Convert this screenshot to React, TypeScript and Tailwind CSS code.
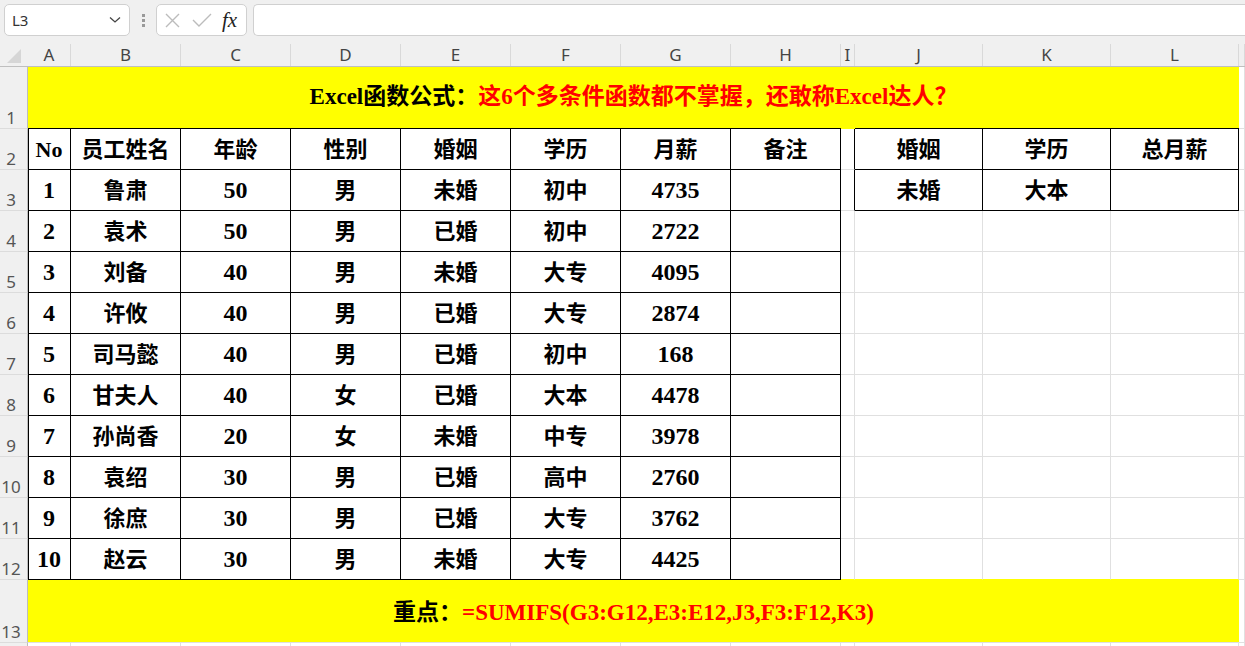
const SERIF = "font-['Liberation_Serif','Noto_Sans_CJK_SC',serif]";
const UI = "font-['Noto_Sans','Liberation_Sans',sans-serif]";

const colW = [
  'w-[43px]',
  'w-[110px]',
  'w-[110px]',
  'w-[110px]',
  'w-[110px]',
  'w-[110px]',
  'w-[110px]',
  'w-[110px]',
  'w-[14px]',
  'w-[128px]',
  'w-[128px]',
  'w-[128px]',
];
const letters = ['A', 'B', 'C', 'D', 'E', 'F', 'G', 'H', 'I', 'J', 'K', 'L', ''];

const head = ['No', '员工姓名', '年龄', '性别', '婚姻', '学历', '月薪', '备注'];
const data: (string | number)[][] = [
  [1, '鲁肃', 50, '男', '未婚', '初中', 4735],
  [2, '袁术', 50, '男', '已婚', '初中', 2722],
  [3, '刘备', 40, '男', '未婚', '大专', 4095],
  [4, '许攸', 40, '男', '已婚', '大专', 2874],
  [5, '司马懿', 40, '男', '已婚', '初中', 168],
  [6, '甘夫人', 40, '女', '已婚', '大本', 4478],
  [7, '孙尚香', 20, '女', '未婚', '中专', 3978],
  [8, '袁绍', 30, '男', '已婚', '高中', 2760],
  [9, '徐庶', 30, '男', '已婚', '大专', 3762],
  [10, '赵云', 30, '男', '未婚', '大专', 4425],
];
const side = [
  ['婚姻', '学历', '总月薪'],
  ['未婚', '大本', ''],
];

function RowHead({ n, h }: { n?: number; h: string }) {
  return (
    <div
      className={`${h} w-[28px] shrink-0 bg-[#f0f0f0] border-r border-b border-r-[#bdbdbd] border-b-[#dcdcdc] flex items-end justify-center pr-[5px] pb-[1px] text-[17px] leading-[18px] text-[#555] ${UI}`}
    >
      {n}
    </div>
  );
}

function Cell({
  w,
  line,
  children,
  extra = '',
}: {
  w: string;
  line: string;
  children?: React.ReactNode;
  extra?: string;
}) {
  const num = typeof children === 'number';
  return (
    <div
      className={`${w} h-full shrink-0 border-r border-b ${line} flex items-center justify-center text-black ${
        num ? 'text-[24px] font-bold' : 'text-[22px] font-semibold'
      } ${extra}`}
    >
      {children}
    </div>
  );
}

function Toolbar() {
  return (
    <div className={`h-[36px] bg-[#f0f0f0] flex items-end pl-[4px] ${UI}`}>
      <div className="w-[126px] h-[32px] bg-white border border-[#d0d0d0] rounded-[5px] flex items-center justify-between pl-[7px] pr-[8px]">
        <span className="text-[15px] text-[#333]">L3</span>
        <svg width="12" height="8" viewBox="0 0 12 8">
          <path d="M1 1.5 L6 6 L11 1.5" fill="none" stroke="#444" strokeWidth="1.3" />
        </svg>
      </div>
      <div className="w-[26px] h-[32px] flex flex-col items-center justify-center gap-[2px]">
        <span className="w-[3px] h-[3px] bg-[#999]" />
        <span className="w-[3px] h-[3px] bg-[#999]" />
        <span className="w-[3px] h-[3px] bg-[#999]" />
      </div>
      <div className="w-[91px] h-[32px] bg-white border border-[#d0d0d0] rounded-[5px] flex items-center pl-[7px] gap-[11px]">
        <svg width="17" height="17" viewBox="0 0 17 17">
          <path d="M2 2 L15 15 M15 2 L2 15" stroke="#bcbcbc" strokeWidth="1.4" />
        </svg>
        <svg width="20" height="16" viewBox="0 0 20 16">
          <path d="M1 8 L7 14 L19 2" fill="none" stroke="#bcbcbc" strokeWidth="1.4" />
        </svg>
        <span className="font-['Liberation_Serif',serif] italic text-[21px] leading-none text-[#222] -ml-[1px]">
          fx
        </span>
      </div>
      <div className="flex-1 h-[32px] ml-[6px] bg-white border border-r-0 border-[#d0d0d0] rounded-l-[5px]" />
    </div>
  );
}

function ColHeader() {
  return (
    <div className={`h-[31px] flex bg-[#f0f0f0] border-b border-[#bfbfbf] ${UI}`}>
      <div className="w-[28px] shrink-0 flex items-end justify-center pb-[2px]">
        <svg width="16" height="16" viewBox="0 0 16 16">
          <path d="M15 1 L15 15 L1 15 Z" fill="#d6d6d6" />
        </svg>
      </div>
      {letters.map((l, i) => (
        <div key={i} className={`${i < 12 ? colW[i] : 'flex-1'} shrink-0 pt-[8px] flex`}>
          <div className="flex-1 border-r border-[#d9d9d9] flex items-center justify-center text-[17px] text-[#444]">
            {l}
          </div>
        </div>
      ))}
    </div>
  );
}

export default function App() {
  const grid = 'border-[#e0e0e0]';
  const blk = 'border-black';
  return (
    <div className="w-[1245px] h-[646px] overflow-hidden bg-white">
      <Toolbar />
      <ColHeader />

      {/* row 1: title */}
      <div className="flex h-[62px]">
        <RowHead n={1} h="h-[62px]" />
        <div className="w-[1211px] shrink-0 flex flex-col">
          <div className={`h-[61px] bg-[#ffff00] flex items-center justify-center text-[23px] font-bold ${SERIF}`}>
            <span className="text-black">Excel函数公式：</span>
            <span className="text-[#ff0000]">这6个多条件函数都不掌握，还敢称Excel达人？</span>
          </div>
          <div className="flex h-px">
            <div className="w-[813px] bg-black" />
            <div className="w-[14px] bg-[#ffff00]" />
            <div className="w-[384px] bg-black" />
          </div>
        </div>
        <div className={`flex-1 border-r border-b ${grid}`} />
      </div>

      {/* rows 2-12 */}
      {[head, ...data].map((row, r) => {
        const sideRow = side[r];
        const last = r === data.length;
        return (
          <div key={r} className={`flex h-[41px] ${SERIF}`}>
            <RowHead n={r + 2} h="h-[41px]" />
            {Array.from({ length: 8 }).map((_, c) => (
              <Cell
                key={c}
                w={colW[c]}
                line={blk}
                extra={c === 0 ? 'shadow-[inset_1px_0_0_#000]' : ''}
              >
                {row[c]}
              </Cell>
            ))}
            <Cell
              w={colW[8]}
              line={`${sideRow ? 'border-r-black' : 'border-r-[#e0e0e0]'} ${
                last ? 'border-b-[#ffff00]' : 'border-b-[#e0e0e0]'
              }`}
            />
            {[0, 1, 2].map((c) => (
              <Cell
                key={c}
                w={colW[9 + c]}
                line={sideRow ? blk : last ? 'border-r-[#e0e0e0] border-b-[#ffff00]' : grid}
              >
                {sideRow ? sideRow[c] : null}
              </Cell>
            ))}
            <div className={`flex-1 border-r border-b ${grid}`} />
          </div>
        );
      })}

      {/* row 13: formula note */}
      <div className="flex h-[63px]">
        <RowHead n={13} h="h-[63px]" />
        <div
          className={`w-[1211px] shrink-0 bg-[#ffff00] border-b ${grid} flex items-center justify-center pt-[4px] text-[23px] font-bold ${SERIF}`}
        >
          <span className="text-black">重点：</span>
          <span className="text-[#ff0000]">=SUMIFS(G3:G12,E3:E12,J3,F3:F12,K3)</span>
        </div>
        <div className={`flex-1 border-r border-b ${grid}`} />
      </div>

      {/* row 14 */}
      <div className="flex h-[30px]">
        <RowHead h="h-[30px]" />
        {colW.map((w, c) => (
          <div key={c} className={`${w} shrink-0 border-r border-b ${grid}`} />
        ))}
        <div className={`flex-1 border-r border-b ${grid}`} />
      </div>
    </div>
  );
}
